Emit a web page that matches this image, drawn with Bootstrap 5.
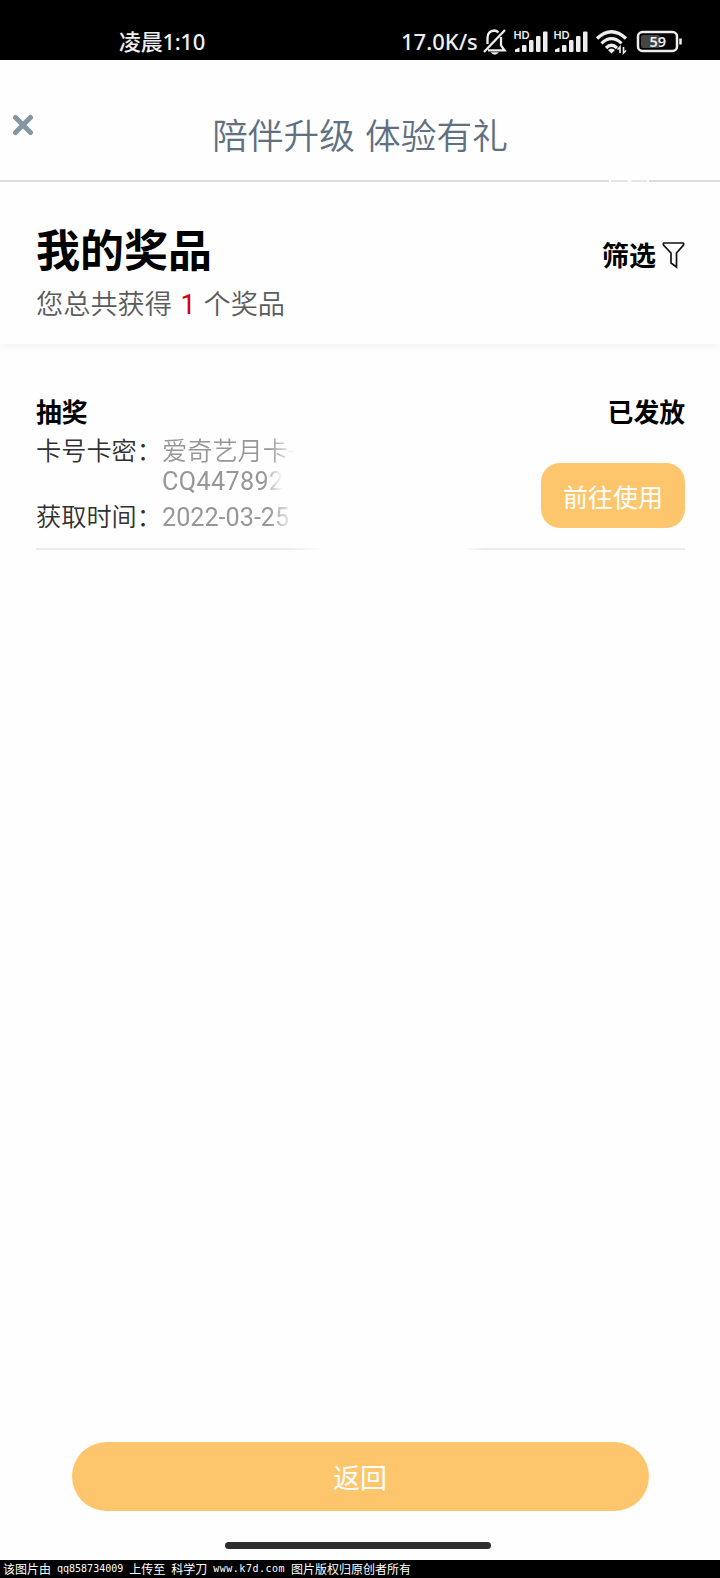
<!DOCTYPE html>
<html lang="zh-CN">
<head>
<meta charset="utf-8">
<meta name="viewport" content="width=device-width, initial-scale=1">
<title>我的奖品</title>
<link href="https://cdn.jsdelivr.net/npm/bootstrap@5.3.0/dist/css/bootstrap.min.css" rel="stylesheet">
<style>
body{font-family:Roboto,"Noto Sans CJK SC",sans-serif;color:#000;background:#fefefe;height:1578px;overflow:hidden}
.status-bar{height:60px;padding:24px 37px 0 119px;background:#000;color:#eee}
.status-bar .clock{font:500 22px/34px "Noto Sans","Noto Sans CJK SC",sans-serif;letter-spacing:-.3px}
.status-bar .speed{font:500 22px/34px "Noto Sans",sans-serif;width:80px}
.app-head{height:122px;padding-top:17px}
.app-head h1{font-size:35.7px;font-weight:350;line-height:120px;color:#607080;white-space:pre;word-spacing:1.5px}
.close-btn{left:12px;top:54px;width:22px;height:22px}
.head-line{height:2px;margin-top:-17px;background:linear-gradient(90deg,#dadde6 609px,#fefefe 609px 611px,#e2e5ec 611px 628px,#fefefe 628px 631px,#e2e5ec 631px 647px,#fefefe 647px 649px,#dadde6 649px)}
.summary{height:162px;padding:44px 35px 0 36px;box-shadow:0 3px 8px rgba(0,0,0,.045)}
.summary h2{font-size:44px;font-weight:700;line-height:52px}
.summary p{font-size:27.2px;font-weight:350;line-height:36px;color:#5c5c5c;margin-top:9px}
.summary .count{color:#d2000f;font-weight:400;margin:0 1px 0 2px}
.filter-btn{font-size:27px;font-weight:700;line-height:36px;margin-top:13px;gap:6px}
.filter-btn svg{margin-top:2px}
.prize{margin:51px 35px 0 36px;height:155px;position:relative}
.prize-title{font-size:25.8px;font-weight:700;line-height:37px}
.prize-body{font-size:25.2px;line-height:31px;color:#303030}
.prize-body dt{font-weight:350;width:126px;white-space:nowrap}
.prize-body dd{color:#979797;font-weight:400;width:134px;overflow:hidden;white-space:nowrap;-webkit-mask-image:linear-gradient(90deg,#000 80%,transparent 99%);mask-image:linear-gradient(90deg,#000 80%,transparent 99%)}
.prize-body dd .cjk{font-weight:350}
.prize-body dd .code{display:block;letter-spacing:.35px;margin-top:-1px;-webkit-mask-image:linear-gradient(90deg,#000 76%,transparent 92%);mask-image:linear-gradient(90deg,#000 76%,transparent 92%)}
.prize-body .date-row{margin-top:5px}
.use-btn,.back-btn{background:#fec66c;color:#fff;border:0}
.use-btn{width:144px;height:65px;border-radius:19px;font-size:25px;font-weight:400;margin-top:31px;padding:6px 0 0}
.rule-line{height:2px;background:linear-gradient(90deg,#ebebeb 252px,transparent 288px,transparent 428px,#ebebeb 448px)}
.back-btn{width:577px;height:69px;font-size:27px;padding:6px 0 0}
.home-bar{width:266px;height:7px;background:#2c2e2e;margin:31px 4px 11px 0}
.credit{height:18px;padding-left:3px;background:#000;color:#fff;font:12px/17px "Noto Sans CJK SC",sans-serif;white-space:nowrap;gap:6px}
.credit .mono{font:10px/17px "DejaVu Sans Mono",monospace}
</style>
</head>
<body class="d-flex flex-column">
<div class="status-bar d-flex justify-content-between flex-shrink-0">
  <span class="clock">凌晨1:10</span>
  <div class="d-flex">
    <span class="speed">17.0K/s</span>
    <svg width="202" height="36" viewBox="481 24 202 36" fill="none" stroke="#eee" aria-hidden="true">
      <path d="M488 50.3H504.500L501 45.500V37M498.500 32.500Q496.500 30.500 494.500 30.500Q487.500 31 487.500 38V44M505 30L484 52" stroke-width="2.300"/>
      <path d="M490.500 52.300H499Q495 57 490.500 52.300Z" fill="#eee" stroke="none"/>
      <g id="signal" stroke="none" fill="#eee">
        <text x="513.500" y="38.500" font-family="Lato, sans-serif" font-size="10.500" font-weight="700" textLength="16">HD</text>
        <path d="M515 52V49.500L519.500 47.500V52Z"/><rect x="522" y="45" width="4.500" height="7" rx="1"/><rect x="529" y="40" width="4.500" height="12" rx="1"/><rect x="536" y="36" width="4.500" height="16" rx="1"/><rect x="543" y="31.500" width="4.500" height="20.500" rx="1"/>
      </g>
      <use href="#signal" x="40"/>
      <g stroke-width="3.200"><path d="M597 38.500Q611.500 25 626 38.500M601.500 43.300Q611.500 34 621.500 43.300M606 48Q611.500 42.500 617 48"/></g>
      <path d="M608 50Q611.500 47 615 50L611.500 53.500Z" fill="#eee" stroke="none"/>
      <path d="M620 53V47L617.500 49.500M623.500 47V53L626 50.500" stroke-width="1.600"/>
      <rect x="638" y="32" width="39" height="19" rx="4.500" stroke-width="2.500"/>
      <rect x="641" y="35" width="19" height="13" rx="2" fill="#444" stroke="none"/>
      <path d="M680.500 38.500V44.500" stroke-width="2.500"/>
      <text x="649.500" y="47" fill="#eee" stroke="none" font-family="Noto Sans, sans-serif" font-size="14.500" font-weight="600" textLength="16.500">59</text>
    </svg>
  </div>
</div>
<header class="app-head position-relative flex-shrink-0 text-center">
  <button class="close-btn position-absolute btn p-0 border-0 d-flex" aria-label="关闭"><svg width="22" height="22" viewBox="0 0 22 22"><path d="M3.500 3.500L18.500 18.500M18.500 3.500L3.500 18.500" stroke="#8496a2" stroke-width="5" stroke-linecap="round"/></svg></button>
  <h1 class="m-0">陪伴升级 体验有礼</h1>
  <div class="head-line"></div>
</header>
<section class="summary d-flex justify-content-between flex-shrink-0">
  <div>
    <h2 class="mb-0">我的奖品</h2>
    <p class="mb-0">您总共获得 <span class="count">1</span> 个奖品</p>
  </div>
  <div class="filter-btn d-flex align-items-start">筛选<svg width="23" height="28" viewBox="0 0 23 28"><path d="M2 2H21Q22 2 21.500 4L14.500 12V26L9 22V12L1.500 4Q1 2 2 2Z" fill="none" stroke="#111" stroke-width="1.700"/></svg></div>
</section>
<main class="flex-grow-1">
  <article class="prize d-flex flex-column justify-content-between">
    <div class="d-flex justify-content-between">
      <div>
        <div class="prize-title">抽奖</div>
        <dl class="prize-body m-0 mt-1">
          <div class="d-flex"><dt>卡号卡密：</dt><dd class="m-0"><span class="cjk">爱奇艺月卡-</span><span class="code">CQ447892-</span></dd></div>
          <div class="date-row d-flex"><dt>获取时间：</dt><dd class="m-0">2022-03-25</dd></div>
        </dl>
      </div>
      <div class="d-flex flex-column align-items-end">
        <div class="prize-title">已发放</div>
        <button class="btn use-btn">前往使用</button>
      </div>
    </div>
    <div class="rule-line"></div>
  </article>
</main>
<footer class="d-flex flex-column align-items-center flex-shrink-0">
  <button class="btn back-btn rounded-pill">返回</button>
  <div class="home-bar rounded-pill"></div>
  <div class="credit d-flex w-100"><span>该图片由</span><span class="mono">qq858734009</span><span>上传至</span><span>科学刀</span><span class="mono" style="letter-spacing:.5px">www.k7d.com</span><span>图片版权归原创者所有</span></div>
</footer>
<script src="https://cdn.jsdelivr.net/npm/bootstrap@5.3.0/dist/js/bootstrap.bundle.min.js"></script>
</body>
</html>
